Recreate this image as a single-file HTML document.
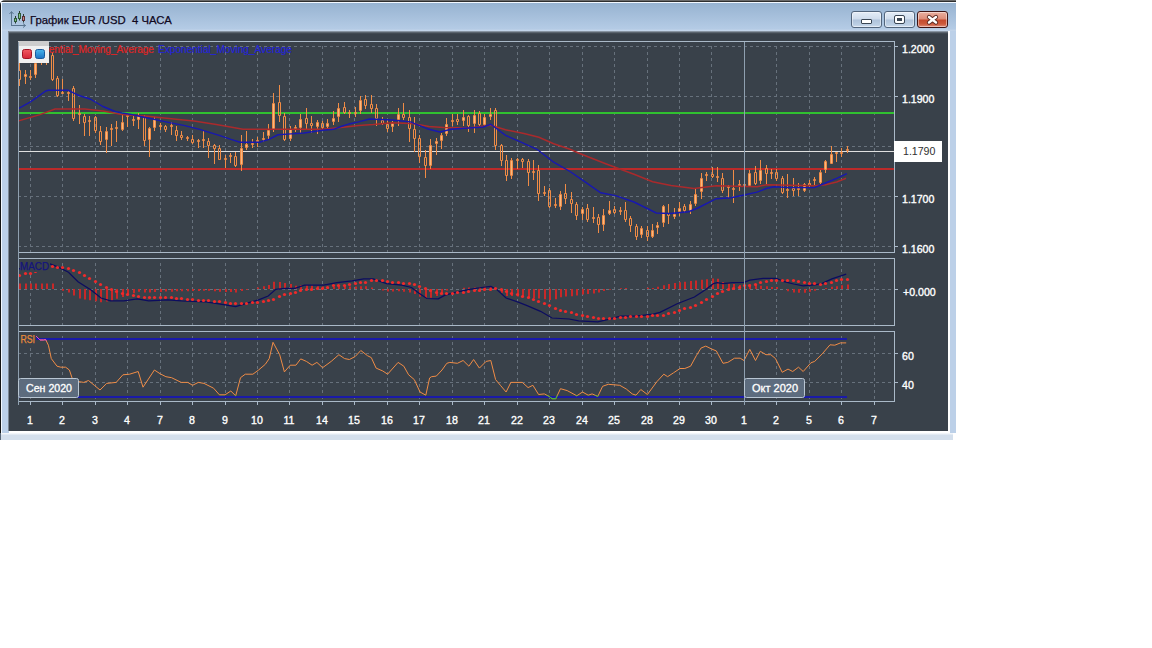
<!DOCTYPE html>
<html><head><meta charset="utf-8"><style>
html,body{margin:0;padding:0;background:#fff;width:1152px;height:648px;overflow:hidden;font-family:"Liberation Sans", sans-serif}
.a{position:absolute}
#title{position:absolute;left:30px;top:13.5px;font-size:11.3px;color:#10081e;white-space:pre;-webkit-text-stroke:0.25px #10081e}
.btn{position:absolute;top:11px;height:15px;border:1px solid #52657c;border-radius:3px;background:linear-gradient(#e4edf7 0%,#cfdcec 48%,#aec2da 52%,#bccfe4 85%,#d0def0 100%);box-shadow:inset 0 0 0 1px rgba(255,255,255,.45)}
svg{position:absolute;left:0;top:0}
</style></head><body>
<div class="a" style="left:0;top:0;width:956px;height:433px;background:#bcd0e8;border-top-left-radius:5px;overflow:hidden">
<div class="a" style="left:0;top:0;width:956px;height:1px;background:#6a6a6a"></div>
<div class="a" style="left:0;top:1px;width:956px;height:1px;background:#2e2e2e"></div>
<div class="a" style="left:0;top:0;width:1px;height:433px;background:#141414"></div>
<div class="a" style="left:1px;top:2px;width:955px;height:1px;background:#f2f8ff"></div>
<div class="a" style="left:1px;top:2px;width:1px;height:431px;background:#f2f8ff"></div>
<div class="a" style="left:2px;top:3px;width:954px;height:28px;background:linear-gradient(#97b3d1,#b4cbe5 92%,#c6d6ea)"></div>

<div class="a" style="left:9px;top:31px;width:941px;height:402px;background:#fff"></div>
<div class="a" style="left:8px;top:31px;width:940px;height:400px;background:linear-gradient(#a4b2c0 0px,#6a7480 1px,#4a525a 2px,#39414a 3px)"></div>
<div class="a" style="left:8px;top:31px;width:1px;height:400px;background:#7d8894"></div>
</div>
<div class="a" style="left:1px;top:433px;width:952px;height:7px;background:linear-gradient(#f4f7fb 0,#f0f4f9 1px,#d4dfec 2px)"></div>
<div class="a" style="left:0;top:433px;width:1px;height:7px;background:#5a6878"></div>
<div id="title">График EUR /USD  4 ЧАСА</div>
<div class="btn" style="left:851px;width:29px"><div class="a" style="left:9px;top:7px;width:9px;height:3px;background:#fff;border:1px solid #3a4654;border-radius:1px"></div></div>
<div class="btn" style="left:884px;width:29px"><div class="a" style="left:10px;top:4px;width:5px;height:3px;border:2px solid #fff;outline:1px solid #3a4654;background:#3a4654;border-radius:1px"></div></div>
<div class="btn" style="left:917px;width:29px;border-color:#3e1414;background:linear-gradient(#eab0a0 0%,#dc8c78 48%,#c44a2e 52%,#cc5a3c 80%,#e09080 100%)">
<svg width="29" height="15" style="position:absolute;left:0;top:0"><path d="M11 5L18 10.5M18 5L11 10.5" stroke="#5a2a22" stroke-width="4.2" stroke-linecap="round"/><path d="M11 5L18 10.5M18 5L11 10.5" stroke="#fff" stroke-width="2.4" stroke-linecap="round"/></svg></div>
<svg width="40" height="32" style="position:absolute;left:0;top:0">
<path d="M11.5 26V12M9.5 14L11.5 11.5L13.5 14M11 25.5H25.5M23 23.5L25.5 25.5L23 27.5" stroke="#5a7590" stroke-width="1" fill="none"/>
<path d="M15.5 16V23.5M19.5 11V20.5M23.5 14V22.5" stroke="#2a3a30" stroke-width="1"/>
<rect x="14.5" y="18.5" width="2" height="3" fill="#88c488" stroke="#2e5a38"/>
<rect x="18.5" y="13.5" width="2" height="5" fill="#88c488" stroke="#2e5a38"/>
<rect x="22.5" y="16.5" width="2" height="4" fill="#c88888" stroke="#5a2e34"/>
</svg>
<svg width="956" height="440" viewBox="0 0 956 440" font-family='"Liberation Sans", sans-serif'>
<line x1="30.5" y1="46" x2="30.5" y2="252" stroke="#67717c" stroke-dasharray="3 3"/>
<line x1="62.5" y1="46" x2="62.5" y2="252" stroke="#67717c" stroke-dasharray="3 3"/>
<line x1="95.5" y1="46" x2="95.5" y2="252" stroke="#67717c" stroke-dasharray="3 3"/>
<line x1="127.5" y1="46" x2="127.5" y2="252" stroke="#67717c" stroke-dasharray="3 3"/>
<line x1="160.5" y1="46" x2="160.5" y2="252" stroke="#67717c" stroke-dasharray="3 3"/>
<line x1="192.5" y1="46" x2="192.5" y2="252" stroke="#67717c" stroke-dasharray="3 3"/>
<line x1="225.5" y1="46" x2="225.5" y2="252" stroke="#67717c" stroke-dasharray="3 3"/>
<line x1="257.5" y1="46" x2="257.5" y2="252" stroke="#67717c" stroke-dasharray="3 3"/>
<line x1="289.5" y1="46" x2="289.5" y2="252" stroke="#67717c" stroke-dasharray="3 3"/>
<line x1="322.5" y1="46" x2="322.5" y2="252" stroke="#67717c" stroke-dasharray="3 3"/>
<line x1="354.5" y1="46" x2="354.5" y2="252" stroke="#67717c" stroke-dasharray="3 3"/>
<line x1="387.5" y1="46" x2="387.5" y2="252" stroke="#67717c" stroke-dasharray="3 3"/>
<line x1="419.5" y1="46" x2="419.5" y2="252" stroke="#67717c" stroke-dasharray="3 3"/>
<line x1="452.5" y1="46" x2="452.5" y2="252" stroke="#67717c" stroke-dasharray="3 3"/>
<line x1="484.5" y1="46" x2="484.5" y2="252" stroke="#67717c" stroke-dasharray="3 3"/>
<line x1="517.5" y1="46" x2="517.5" y2="252" stroke="#67717c" stroke-dasharray="3 3"/>
<line x1="549.5" y1="46" x2="549.5" y2="252" stroke="#67717c" stroke-dasharray="3 3"/>
<line x1="582.5" y1="46" x2="582.5" y2="252" stroke="#67717c" stroke-dasharray="3 3"/>
<line x1="614.5" y1="46" x2="614.5" y2="252" stroke="#67717c" stroke-dasharray="3 3"/>
<line x1="647.5" y1="46" x2="647.5" y2="252" stroke="#67717c" stroke-dasharray="3 3"/>
<line x1="679.5" y1="46" x2="679.5" y2="252" stroke="#67717c" stroke-dasharray="3 3"/>
<line x1="711.5" y1="46" x2="711.5" y2="252" stroke="#67717c" stroke-dasharray="3 3"/>
<line x1="744.5" y1="46" x2="744.5" y2="252" stroke="#67717c" stroke-dasharray="3 3"/>
<line x1="776.5" y1="46" x2="776.5" y2="252" stroke="#67717c" stroke-dasharray="3 3"/>
<line x1="809.5" y1="46" x2="809.5" y2="252" stroke="#67717c" stroke-dasharray="3 3"/>
<line x1="841.5" y1="46" x2="841.5" y2="252" stroke="#67717c" stroke-dasharray="3 3"/>
<line x1="874.5" y1="46" x2="874.5" y2="252" stroke="#67717c" stroke-dasharray="3 3"/>
<line x1="30.5" y1="263" x2="30.5" y2="325" stroke="#67717c" stroke-dasharray="3 3"/>
<line x1="62.5" y1="263" x2="62.5" y2="325" stroke="#67717c" stroke-dasharray="3 3"/>
<line x1="95.5" y1="263" x2="95.5" y2="325" stroke="#67717c" stroke-dasharray="3 3"/>
<line x1="127.5" y1="263" x2="127.5" y2="325" stroke="#67717c" stroke-dasharray="3 3"/>
<line x1="160.5" y1="263" x2="160.5" y2="325" stroke="#67717c" stroke-dasharray="3 3"/>
<line x1="192.5" y1="263" x2="192.5" y2="325" stroke="#67717c" stroke-dasharray="3 3"/>
<line x1="225.5" y1="263" x2="225.5" y2="325" stroke="#67717c" stroke-dasharray="3 3"/>
<line x1="257.5" y1="263" x2="257.5" y2="325" stroke="#67717c" stroke-dasharray="3 3"/>
<line x1="289.5" y1="263" x2="289.5" y2="325" stroke="#67717c" stroke-dasharray="3 3"/>
<line x1="322.5" y1="263" x2="322.5" y2="325" stroke="#67717c" stroke-dasharray="3 3"/>
<line x1="354.5" y1="263" x2="354.5" y2="325" stroke="#67717c" stroke-dasharray="3 3"/>
<line x1="387.5" y1="263" x2="387.5" y2="325" stroke="#67717c" stroke-dasharray="3 3"/>
<line x1="419.5" y1="263" x2="419.5" y2="325" stroke="#67717c" stroke-dasharray="3 3"/>
<line x1="452.5" y1="263" x2="452.5" y2="325" stroke="#67717c" stroke-dasharray="3 3"/>
<line x1="484.5" y1="263" x2="484.5" y2="325" stroke="#67717c" stroke-dasharray="3 3"/>
<line x1="517.5" y1="263" x2="517.5" y2="325" stroke="#67717c" stroke-dasharray="3 3"/>
<line x1="549.5" y1="263" x2="549.5" y2="325" stroke="#67717c" stroke-dasharray="3 3"/>
<line x1="582.5" y1="263" x2="582.5" y2="325" stroke="#67717c" stroke-dasharray="3 3"/>
<line x1="614.5" y1="263" x2="614.5" y2="325" stroke="#67717c" stroke-dasharray="3 3"/>
<line x1="647.5" y1="263" x2="647.5" y2="325" stroke="#67717c" stroke-dasharray="3 3"/>
<line x1="679.5" y1="263" x2="679.5" y2="325" stroke="#67717c" stroke-dasharray="3 3"/>
<line x1="711.5" y1="263" x2="711.5" y2="325" stroke="#67717c" stroke-dasharray="3 3"/>
<line x1="744.5" y1="263" x2="744.5" y2="325" stroke="#67717c" stroke-dasharray="3 3"/>
<line x1="776.5" y1="263" x2="776.5" y2="325" stroke="#67717c" stroke-dasharray="3 3"/>
<line x1="809.5" y1="263" x2="809.5" y2="325" stroke="#67717c" stroke-dasharray="3 3"/>
<line x1="841.5" y1="263" x2="841.5" y2="325" stroke="#67717c" stroke-dasharray="3 3"/>
<line x1="874.5" y1="263" x2="874.5" y2="325" stroke="#67717c" stroke-dasharray="3 3"/>
<line x1="30.5" y1="336" x2="30.5" y2="401" stroke="#67717c" stroke-dasharray="3 3"/>
<line x1="62.5" y1="336" x2="62.5" y2="401" stroke="#67717c" stroke-dasharray="3 3"/>
<line x1="95.5" y1="336" x2="95.5" y2="401" stroke="#67717c" stroke-dasharray="3 3"/>
<line x1="127.5" y1="336" x2="127.5" y2="401" stroke="#67717c" stroke-dasharray="3 3"/>
<line x1="160.5" y1="336" x2="160.5" y2="401" stroke="#67717c" stroke-dasharray="3 3"/>
<line x1="192.5" y1="336" x2="192.5" y2="401" stroke="#67717c" stroke-dasharray="3 3"/>
<line x1="225.5" y1="336" x2="225.5" y2="401" stroke="#67717c" stroke-dasharray="3 3"/>
<line x1="257.5" y1="336" x2="257.5" y2="401" stroke="#67717c" stroke-dasharray="3 3"/>
<line x1="289.5" y1="336" x2="289.5" y2="401" stroke="#67717c" stroke-dasharray="3 3"/>
<line x1="322.5" y1="336" x2="322.5" y2="401" stroke="#67717c" stroke-dasharray="3 3"/>
<line x1="354.5" y1="336" x2="354.5" y2="401" stroke="#67717c" stroke-dasharray="3 3"/>
<line x1="387.5" y1="336" x2="387.5" y2="401" stroke="#67717c" stroke-dasharray="3 3"/>
<line x1="419.5" y1="336" x2="419.5" y2="401" stroke="#67717c" stroke-dasharray="3 3"/>
<line x1="452.5" y1="336" x2="452.5" y2="401" stroke="#67717c" stroke-dasharray="3 3"/>
<line x1="484.5" y1="336" x2="484.5" y2="401" stroke="#67717c" stroke-dasharray="3 3"/>
<line x1="517.5" y1="336" x2="517.5" y2="401" stroke="#67717c" stroke-dasharray="3 3"/>
<line x1="549.5" y1="336" x2="549.5" y2="401" stroke="#67717c" stroke-dasharray="3 3"/>
<line x1="582.5" y1="336" x2="582.5" y2="401" stroke="#67717c" stroke-dasharray="3 3"/>
<line x1="614.5" y1="336" x2="614.5" y2="401" stroke="#67717c" stroke-dasharray="3 3"/>
<line x1="647.5" y1="336" x2="647.5" y2="401" stroke="#67717c" stroke-dasharray="3 3"/>
<line x1="679.5" y1="336" x2="679.5" y2="401" stroke="#67717c" stroke-dasharray="3 3"/>
<line x1="711.5" y1="336" x2="711.5" y2="401" stroke="#67717c" stroke-dasharray="3 3"/>
<line x1="744.5" y1="336" x2="744.5" y2="401" stroke="#67717c" stroke-dasharray="3 3"/>
<line x1="776.5" y1="336" x2="776.5" y2="401" stroke="#67717c" stroke-dasharray="3 3"/>
<line x1="809.5" y1="336" x2="809.5" y2="401" stroke="#67717c" stroke-dasharray="3 3"/>
<line x1="841.5" y1="336" x2="841.5" y2="401" stroke="#67717c" stroke-dasharray="3 3"/>
<line x1="874.5" y1="336" x2="874.5" y2="401" stroke="#67717c" stroke-dasharray="3 3"/>
<line x1="19" y1="46.5" x2="894" y2="46.5" stroke="#67717c" stroke-dasharray="3 3" stroke-dashoffset="1"/>
<line x1="19" y1="96.5" x2="894" y2="96.5" stroke="#67717c" stroke-dasharray="3 3" stroke-dashoffset="1"/>
<line x1="19" y1="146.5" x2="894" y2="146.5" stroke="#67717c" stroke-dasharray="3 3" stroke-dashoffset="1"/>
<line x1="19" y1="196.5" x2="894" y2="196.5" stroke="#67717c" stroke-dasharray="3 3" stroke-dashoffset="1"/>
<line x1="19" y1="246.5" x2="894" y2="246.5" stroke="#67717c" stroke-dasharray="3 3" stroke-dashoffset="1"/>
<line x1="19" y1="289.5" x2="894" y2="289.5" stroke="#67717c" stroke-dasharray="3 3" stroke-dashoffset="1"/>
<line x1="19" y1="353.5" x2="894" y2="353.5" stroke="#67717c" stroke-dasharray="3 3" stroke-dashoffset="1"/>
<line x1="19" y1="382.5" x2="894" y2="382.5" stroke="#67717c" stroke-dasharray="3 3" stroke-dashoffset="1"/>
<rect x="18.5" y="41.5" width="876" height="211" fill="none" stroke="#aab9c8" stroke-width="1"/>
<rect x="18.5" y="258.5" width="876" height="67" fill="none" stroke="#aab9c8" stroke-width="1"/>
<rect x="18.5" y="331.5" width="876" height="70" fill="none" stroke="#aab9c8" stroke-width="1"/>
<line x1="894" y1="46.5" x2="898" y2="46.5" stroke="#aab9c8"/>
<text x="902" y="53" font-size="10.6" fill="#fff" stroke="#fff" stroke-width="0.35">1.2000</text>
<line x1="894" y1="96.5" x2="898" y2="96.5" stroke="#aab9c8"/>
<text x="902" y="103" font-size="10.6" fill="#fff" stroke="#fff" stroke-width="0.35">1.1900</text>
<line x1="894" y1="196.5" x2="898" y2="196.5" stroke="#aab9c8"/>
<text x="902" y="203" font-size="10.6" fill="#fff" stroke="#fff" stroke-width="0.35">1.1700</text>
<line x1="894" y1="246.5" x2="898" y2="246.5" stroke="#aab9c8"/>
<text x="902" y="253" font-size="10.6" fill="#fff" stroke="#fff" stroke-width="0.35">1.1600</text>
<line x1="894" y1="289.5" x2="898" y2="289.5" stroke="#aab9c8"/>
<text x="903" y="296" font-size="10.6" fill="#fff" stroke="#fff" stroke-width="0.35">+0.000</text>
<line x1="894" y1="353.5" x2="898" y2="353.5" stroke="#aab9c8"/>
<text x="902" y="360" font-size="10.6" fill="#fff" stroke="#fff" stroke-width="0.35">60</text>
<line x1="894" y1="382.5" x2="898" y2="382.5" stroke="#aab9c8"/>
<text x="902" y="389" font-size="10.6" fill="#fff" stroke="#fff" stroke-width="0.35">40</text>
<line x1="30.5" y1="401" x2="30.5" y2="405" stroke="#aab9c8"/>
<text x="30" y="424" font-size="10.6" fill="#fff" stroke="#fff" stroke-width="0.35" text-anchor="middle">1</text>
<line x1="62.5" y1="401" x2="62.5" y2="405" stroke="#aab9c8"/>
<text x="62" y="424" font-size="10.6" fill="#fff" stroke="#fff" stroke-width="0.35" text-anchor="middle">2</text>
<line x1="95.5" y1="401" x2="95.5" y2="405" stroke="#aab9c8"/>
<text x="95" y="424" font-size="10.6" fill="#fff" stroke="#fff" stroke-width="0.35" text-anchor="middle">3</text>
<line x1="127.5" y1="401" x2="127.5" y2="405" stroke="#aab9c8"/>
<text x="127" y="424" font-size="10.6" fill="#fff" stroke="#fff" stroke-width="0.35" text-anchor="middle">4</text>
<line x1="160.5" y1="401" x2="160.5" y2="405" stroke="#aab9c8"/>
<text x="160" y="424" font-size="10.6" fill="#fff" stroke="#fff" stroke-width="0.35" text-anchor="middle">7</text>
<line x1="192.5" y1="401" x2="192.5" y2="405" stroke="#aab9c8"/>
<text x="192" y="424" font-size="10.6" fill="#fff" stroke="#fff" stroke-width="0.35" text-anchor="middle">8</text>
<line x1="225.5" y1="401" x2="225.5" y2="405" stroke="#aab9c8"/>
<text x="225" y="424" font-size="10.6" fill="#fff" stroke="#fff" stroke-width="0.35" text-anchor="middle">9</text>
<line x1="257.5" y1="401" x2="257.5" y2="405" stroke="#aab9c8"/>
<text x="257" y="424" font-size="10.6" fill="#fff" stroke="#fff" stroke-width="0.35" text-anchor="middle">10</text>
<line x1="289.5" y1="401" x2="289.5" y2="405" stroke="#aab9c8"/>
<text x="289" y="424" font-size="10.6" fill="#fff" stroke="#fff" stroke-width="0.35" text-anchor="middle">11</text>
<line x1="322.5" y1="401" x2="322.5" y2="405" stroke="#aab9c8"/>
<text x="322" y="424" font-size="10.6" fill="#fff" stroke="#fff" stroke-width="0.35" text-anchor="middle">14</text>
<line x1="354.5" y1="401" x2="354.5" y2="405" stroke="#aab9c8"/>
<text x="354" y="424" font-size="10.6" fill="#fff" stroke="#fff" stroke-width="0.35" text-anchor="middle">15</text>
<line x1="387.5" y1="401" x2="387.5" y2="405" stroke="#aab9c8"/>
<text x="387" y="424" font-size="10.6" fill="#fff" stroke="#fff" stroke-width="0.35" text-anchor="middle">16</text>
<line x1="419.5" y1="401" x2="419.5" y2="405" stroke="#aab9c8"/>
<text x="419" y="424" font-size="10.6" fill="#fff" stroke="#fff" stroke-width="0.35" text-anchor="middle">17</text>
<line x1="452.5" y1="401" x2="452.5" y2="405" stroke="#aab9c8"/>
<text x="452" y="424" font-size="10.6" fill="#fff" stroke="#fff" stroke-width="0.35" text-anchor="middle">18</text>
<line x1="484.5" y1="401" x2="484.5" y2="405" stroke="#aab9c8"/>
<text x="484" y="424" font-size="10.6" fill="#fff" stroke="#fff" stroke-width="0.35" text-anchor="middle">21</text>
<line x1="517.5" y1="401" x2="517.5" y2="405" stroke="#aab9c8"/>
<text x="517" y="424" font-size="10.6" fill="#fff" stroke="#fff" stroke-width="0.35" text-anchor="middle">22</text>
<line x1="549.5" y1="401" x2="549.5" y2="405" stroke="#aab9c8"/>
<text x="549" y="424" font-size="10.6" fill="#fff" stroke="#fff" stroke-width="0.35" text-anchor="middle">23</text>
<line x1="582.5" y1="401" x2="582.5" y2="405" stroke="#aab9c8"/>
<text x="582" y="424" font-size="10.6" fill="#fff" stroke="#fff" stroke-width="0.35" text-anchor="middle">24</text>
<line x1="614.5" y1="401" x2="614.5" y2="405" stroke="#aab9c8"/>
<text x="614" y="424" font-size="10.6" fill="#fff" stroke="#fff" stroke-width="0.35" text-anchor="middle">25</text>
<line x1="647.5" y1="401" x2="647.5" y2="405" stroke="#aab9c8"/>
<text x="647" y="424" font-size="10.6" fill="#fff" stroke="#fff" stroke-width="0.35" text-anchor="middle">28</text>
<line x1="679.5" y1="401" x2="679.5" y2="405" stroke="#aab9c8"/>
<text x="679" y="424" font-size="10.6" fill="#fff" stroke="#fff" stroke-width="0.35" text-anchor="middle">29</text>
<line x1="711.5" y1="401" x2="711.5" y2="405" stroke="#aab9c8"/>
<text x="711" y="424" font-size="10.6" fill="#fff" stroke="#fff" stroke-width="0.35" text-anchor="middle">30</text>
<line x1="744.5" y1="401" x2="744.5" y2="405" stroke="#aab9c8"/>
<text x="744" y="424" font-size="10.6" fill="#fff" stroke="#fff" stroke-width="0.35" text-anchor="middle">1</text>
<line x1="776.5" y1="401" x2="776.5" y2="405" stroke="#aab9c8"/>
<text x="776" y="424" font-size="10.6" fill="#fff" stroke="#fff" stroke-width="0.35" text-anchor="middle">2</text>
<line x1="809.5" y1="401" x2="809.5" y2="405" stroke="#aab9c8"/>
<text x="809" y="424" font-size="10.6" fill="#fff" stroke="#fff" stroke-width="0.35" text-anchor="middle">5</text>
<line x1="841.5" y1="401" x2="841.5" y2="405" stroke="#aab9c8"/>
<text x="841" y="424" font-size="10.6" fill="#fff" stroke="#fff" stroke-width="0.35" text-anchor="middle">6</text>
<line x1="874.5" y1="401" x2="874.5" y2="405" stroke="#aab9c8"/>
<text x="874" y="424" font-size="10.6" fill="#fff" stroke="#fff" stroke-width="0.35" text-anchor="middle">7</text>
<defs><clipPath id="cm"><rect x="19" y="42" width="875" height="210"/></clipPath><clipPath id="cd"><rect x="19" y="259" width="875" height="66"/></clipPath><clipPath id="cr"><rect x="19" y="332" width="875" height="69"/></clipPath></defs>
<line x1="19" y1="113" x2="894" y2="113" stroke="#30c030" stroke-width="2"/>
<line x1="19" y1="151.5" x2="894" y2="151.5" stroke="#e0e0e0" stroke-width="1"/>
<line x1="19" y1="169" x2="894" y2="169" stroke="#bc2a2a" stroke-width="2"/>
<g clip-path="url(#cm)"><path d="M25 75h1v1h-1zM35 64h1v10h-1zM41 59h1v2h-1zM106 132h1v7h-1zM122 123h1v6h-1zM138 117h1v2h-1zM149 129h1v10h-1zM154 120h1v7h-1zM241 149h1v15h-1zM246 145h1v2h-1zM268 131h1v4h-1zM273 104h1v25h-1zM290 130h1v8h-1zM300 120h1v7h-1zM317 123h1v3h-1zM327 124h1v2h-1zM333 119h1v2h-1zM338 109h1v7h-1zM360 101h1v9h-1zM392 124h1v2h-1zM398 115h1v4h-1zM430 146h1v19h-1zM436 142h1v1h-1zM441 136h1v4h-1zM446 125h1v8h-1zM463 118h1v2h-1zM474 116h1v7h-1zM484 118h1v6h-1zM490 115h1v1h-1zM511 161h1v14h-1zM560 195h1v11h-1zM582 210h1v3h-1zM603 216h1v8h-1zM609 211h1v2h-1zM641 229h1v5h-1zM652 231h1v5h-1zM657 226h1v1h-1zM663 207h1v15h-1zM674 215h1v1h-1zM679 209h1v2h-1zM690 205h1v5h-1zM695 195h1v8h-1zM701 179h1v12h-1zM749 174h1v11h-1zM760 171h1v9h-1zM804 185h1v5h-1zM820 173h1v9h-1zM825 162h1v7h-1zM831 155h1v8h-1z" fill="#f8b880"/><path d="M19.5 63V70M19.5 80V86M18.5 70.5h2v9h-2zM25.5 70V74M25.5 77V84M24.5 74.5h2v2h-2zM30.5 70V76M30.5 78V80M29.5 76.5h2v1h-2zM35.5 58V63M35.5 75V78M34.5 63.5h2v11h-2zM41.5 55V58M41.5 62V65M40.5 58.5h2v3h-2zM46.5 52V56M46.5 60V65M45.5 56.5h2v3h-2zM52.5 52V55M52.5 80V81M51.5 55.5h2v24h-2zM57.5 76V78M57.5 96V97M56.5 78.5h2v17h-2zM62.5 79V92M62.5 94V94M61.5 92.5h2v1h-2zM68.5 90V92M68.5 94V101M67.5 92.5h2v1h-2zM73.5 86V88M73.5 119V121M72.5 88.5h2v30h-2zM79.5 105V113M79.5 115V124M78.5 113.5h2v1h-2zM84.5 114V116M84.5 123V136M83.5 116.5h2v6h-2zM89.5 116V120M89.5 122V136M88.5 120.5h2v1h-2zM95.5 116V117M95.5 131V133M94.5 117.5h2v13h-2zM100.5 126V131M100.5 142V145M99.5 131.5h2v10h-2zM106.5 127V131M106.5 140V153M105.5 131.5h2v8h-2zM111.5 124V128M111.5 130V146M110.5 128.5h2v1h-2zM116.5 121V127M116.5 129V142M115.5 127.5h2v1h-2zM122.5 114V122M122.5 130V131M121.5 122.5h2v7h-2zM127.5 114V115M127.5 117V127M126.5 115.5h2v1h-2zM133.5 115V119M133.5 121V126M132.5 119.5h2v1h-2zM138.5 113V116M138.5 120V129M137.5 116.5h2v3h-2zM144.5 115V117M144.5 141V146M143.5 117.5h2v23h-2zM149.5 127V128M149.5 140V157M148.5 128.5h2v11h-2zM154.5 117V119M154.5 128V131M153.5 119.5h2v8h-2zM160.5 123V125M160.5 127V130M159.5 125.5h2v1h-2zM165.5 125V126M165.5 130V132M164.5 126.5h2v3h-2zM171.5 122V125M171.5 127V135M170.5 125.5h2v1h-2zM176.5 126V130M176.5 136V141M175.5 130.5h2v5h-2zM181.5 131V135M181.5 138V140M180.5 135.5h2v2h-2zM187.5 136V137M187.5 139V141M186.5 137.5h2v1h-2zM192.5 135V139M192.5 143V144M191.5 139.5h2v3h-2zM198.5 139V140M198.5 142V148M197.5 140.5h2v1h-2zM203.5 131V139M203.5 141V148M202.5 139.5h2v1h-2zM208.5 138V141M208.5 146V158M207.5 141.5h2v4h-2zM214.5 144V145M214.5 149V164M213.5 145.5h2v3h-2zM219.5 145V148M219.5 160V160M218.5 148.5h2v11h-2zM225.5 155V158M225.5 160V168M224.5 158.5h2v1h-2zM230.5 153V155M230.5 157V163M229.5 155.5h2v1h-2zM235.5 152V156M235.5 166V167M234.5 156.5h2v9h-2zM241.5 135V148M241.5 165V171M240.5 148.5h2v16h-2zM246.5 131V144M246.5 148V150M245.5 144.5h2v3h-2zM252.5 139V143M252.5 145V148M251.5 143.5h2v1h-2zM257.5 137V140M257.5 142V147M256.5 140.5h2v1h-2zM263.5 132V138M263.5 140V142M262.5 138.5h2v1h-2zM268.5 124V130M268.5 136V139M267.5 130.5h2v5h-2zM273.5 93V103M273.5 130V132M272.5 103.5h2v26h-2zM279.5 85V102M279.5 116V122M278.5 102.5h2v13h-2zM284.5 113V116M284.5 140V141M283.5 116.5h2v23h-2zM290.5 126V129M290.5 139V141M289.5 129.5h2v9h-2zM295.5 125V127M295.5 129V132M294.5 127.5h2v1h-2zM300.5 114V119M300.5 128V133M299.5 119.5h2v8h-2zM306.5 108V118M306.5 124V129M305.5 118.5h2v5h-2zM311.5 116V123M311.5 126V133M310.5 123.5h2v2h-2zM317.5 120V122M317.5 127V134M316.5 122.5h2v4h-2zM322.5 121V123M322.5 128V130M321.5 123.5h2v4h-2zM327.5 119V123M327.5 127V129M326.5 123.5h2v3h-2zM333.5 111V118M333.5 122V125M332.5 118.5h2v3h-2zM338.5 103V108M338.5 117V122M337.5 108.5h2v8h-2zM344.5 102V107M344.5 113V114M343.5 107.5h2v5h-2zM349.5 110V112M349.5 114V118M348.5 112.5h2v1h-2zM355.5 107V112M355.5 114V117M354.5 112.5h2v1h-2zM360.5 96V100M360.5 111V114M359.5 100.5h2v10h-2zM365.5 95V99M365.5 106V109M364.5 99.5h2v6h-2zM371.5 95V104M371.5 109V113M370.5 104.5h2v4h-2zM376.5 104V108M376.5 119V126M375.5 108.5h2v10h-2zM382.5 117V120M382.5 124V125M381.5 120.5h2v3h-2zM387.5 120V124M387.5 129V132M386.5 124.5h2v4h-2zM392.5 121V123M392.5 127V132M391.5 123.5h2v3h-2zM398.5 108V114M398.5 120V126M397.5 114.5h2v5h-2zM403.5 103V114M403.5 118V120M402.5 114.5h2v3h-2zM409.5 110V117M409.5 129V142M408.5 117.5h2v11h-2zM414.5 117V129M414.5 139V152M413.5 129.5h2v9h-2zM419.5 135V138M419.5 157V163M418.5 138.5h2v18h-2zM425.5 150V157M425.5 166V178M424.5 157.5h2v8h-2zM430.5 139V145M430.5 166V169M429.5 145.5h2v20h-2zM436.5 138V141M436.5 144V155M435.5 141.5h2v2h-2zM441.5 133V135M441.5 141V149M440.5 135.5h2v5h-2zM446.5 118V124M446.5 134V136M445.5 124.5h2v9h-2zM452.5 114V120M452.5 122V126M451.5 120.5h2v1h-2zM457.5 114V119M457.5 122V125M456.5 119.5h2v2h-2zM463.5 110V117M463.5 121V126M462.5 117.5h2v3h-2zM468.5 115V116M468.5 126V132M467.5 116.5h2v9h-2zM474.5 110V115M474.5 124V133M473.5 115.5h2v8h-2zM479.5 111V113M479.5 125V126M478.5 113.5h2v11h-2zM484.5 114V117M484.5 125V126M483.5 117.5h2v7h-2zM490.5 108V114M490.5 117V120M489.5 114.5h2v2h-2zM495.5 108V110M495.5 146V150M494.5 110.5h2v35h-2zM501.5 144V145M501.5 161V166M500.5 145.5h2v15h-2zM506.5 155V160M506.5 176V181M505.5 160.5h2v15h-2zM511.5 158V160M511.5 176V179M510.5 160.5h2v15h-2zM517.5 158V159M517.5 161V169M516.5 159.5h2v1h-2zM522.5 158V159M522.5 162V168M521.5 159.5h2v2h-2zM528.5 159V161M528.5 173V186M527.5 161.5h2v11h-2zM533.5 160V171M533.5 173V180M532.5 171.5h2v1h-2zM538.5 165V170M538.5 194V201M537.5 170.5h2v23h-2zM544.5 186V192M544.5 194V196M543.5 192.5h2v1h-2zM549.5 188V190M549.5 207V208M548.5 190.5h2v16h-2zM555.5 198V204M555.5 206V208M554.5 204.5h2v1h-2zM560.5 191V194M560.5 207V210M559.5 194.5h2v12h-2zM565.5 184V193M565.5 199V204M564.5 193.5h2v5h-2zM571.5 192V199M571.5 204V213M570.5 199.5h2v4h-2zM576.5 202V204M576.5 216V220M575.5 204.5h2v11h-2zM582.5 207V209M582.5 214V220M581.5 209.5h2v4h-2zM587.5 204V208M587.5 220V222M586.5 208.5h2v11h-2zM593.5 207V217M593.5 219V223M592.5 217.5h2v1h-2zM598.5 214V217M598.5 225V233M597.5 217.5h2v7h-2zM603.5 209V215M603.5 225V231M602.5 215.5h2v9h-2zM609.5 201V210M609.5 214V215M608.5 210.5h2v3h-2zM614.5 206V209M614.5 213V214M613.5 209.5h2v3h-2zM620.5 207V210M620.5 212V215M619.5 210.5h2v1h-2zM625.5 202V210M625.5 220V222M624.5 210.5h2v9h-2zM630.5 216V218M630.5 226V232M629.5 218.5h2v7h-2zM636.5 224V226M636.5 237V240M635.5 226.5h2v10h-2zM641.5 226V228M641.5 235V238M640.5 228.5h2v6h-2zM647.5 226V230M647.5 237V241M646.5 230.5h2v6h-2zM652.5 224V230M652.5 237V238M651.5 230.5h2v6h-2zM657.5 222V225M657.5 228V234M656.5 225.5h2v2h-2zM663.5 205V206M663.5 223V227M662.5 206.5h2v16h-2zM668.5 204V213M668.5 216V224M667.5 213.5h2v2h-2zM674.5 208V214M674.5 217V219M673.5 214.5h2v2h-2zM679.5 202V208M679.5 212V216M678.5 208.5h2v3h-2zM684.5 204V206M684.5 211V213M683.5 206.5h2v4h-2zM690.5 201V204M690.5 211V214M689.5 204.5h2v6h-2zM695.5 188V194M695.5 204V206M694.5 194.5h2v9h-2zM701.5 173V178M701.5 192V199M700.5 178.5h2v13h-2zM706.5 172V174M706.5 176V181M705.5 174.5h2v1h-2zM712.5 167V174M712.5 177V178M711.5 174.5h2v2h-2zM717.5 167V176M717.5 178V182M716.5 176.5h2v1h-2zM722.5 173V178M722.5 191V193M721.5 178.5h2v12h-2zM728.5 185V186M728.5 188V198M727.5 186.5h2v1h-2zM733.5 170V188M733.5 190V203M732.5 188.5h2v1h-2zM739.5 180V184M739.5 186V191M738.5 184.5h2v1h-2zM744.5 179V184M744.5 186V188M743.5 184.5h2v1h-2zM749.5 170V173M749.5 186V187M748.5 173.5h2v12h-2zM755.5 166V172M755.5 184V185M754.5 172.5h2v11h-2zM760.5 160V170M760.5 181V184M759.5 170.5h2v10h-2zM766.5 165V168M766.5 174V185M765.5 168.5h2v5h-2zM771.5 169V172M771.5 174V179M770.5 172.5h2v1h-2zM776.5 169V172M776.5 179V181M775.5 172.5h2v6h-2zM782.5 176V178M782.5 193V194M781.5 178.5h2v14h-2zM787.5 174V189M787.5 191V198M786.5 189.5h2v1h-2zM793.5 178V188M793.5 191V196M792.5 188.5h2v2h-2zM798.5 183V188M798.5 190V196M797.5 188.5h2v1h-2zM804.5 183V184M804.5 191V192M803.5 184.5h2v6h-2zM809.5 180V183M809.5 186V187M808.5 183.5h2v2h-2zM814.5 177V179M814.5 181V186M813.5 179.5h2v1h-2zM820.5 170V172M820.5 183V184M819.5 172.5h2v10h-2zM825.5 160V161M825.5 170V173M824.5 161.5h2v8h-2zM831.5 146V154M831.5 164V164M830.5 154.5h2v9h-2zM836.5 152V152M836.5 154V162M835.5 152.5h2v1h-2zM841.5 148V152M841.5 154V157M840.5 152.5h2v1h-2zM847.5 146V149M847.5 151V153M846.5 149.5h2v1h-2z" stroke="#f08c46" stroke-width="1" fill="none"/></g>
<g clip-path="url(#cm)"><polyline points="18.0,121.0 40.0,114.6 55.0,109.0 84.7,109.0 103.0,111.0 122.0,114.5 147.8,116.3 173.7,119.0 194.0,121.0 216.3,124.6 243.0,129.3 267.0,129.3 322.6,129.3 333.7,128.3 350.0,126.5 358.5,125.6 373.3,124.6 391.9,122.8 414.0,123.7 428.9,126.5 443.7,127.4 468.5,128.0 490.7,125.2 505.6,129.8 524.0,133.5 538.9,137.2 553.7,143.7 570.0,149.3 578.5,153.0 606.3,164.0 634.0,174.3 652.6,181.7 671.0,185.4 694.0,188.5 716.3,185.7 757.0,186.7 766.3,184.8 814.4,185.7 825.5,184.8 836.7,182.0 846.0,178.3" fill="none" stroke="#aa2a2c" stroke-width="1.5"/>
<polyline points="18.0,108.8 30.5,101.8 45.8,91.0 48.5,90.3 68.0,90.3 73.5,92.8 79.0,95.5 90.0,99.0 97.0,103.0 103.0,106.5 115.0,111.5 122.0,113.0 131.0,114.4 144.0,117.2 166.0,121.9 184.8,125.6 199.6,129.3 220.0,135.7 231.0,139.4 240.0,142.2 259.6,142.2 268.9,139.4 278.0,134.8 291.0,133.9 304.0,133.0 322.6,130.2 333.7,129.3 341.0,126.5 350.0,123.7 358.5,121.9 369.6,119.0 391.9,120.0 410.4,121.9 419.6,125.6 428.9,129.3 440.0,132.0 451.0,129.3 468.5,128.0 483.3,127.0 490.7,124.3 505.6,135.4 520.4,141.9 537.0,149.3 553.7,162.2 570.0,171.5 582.2,179.8 600.7,192.8 615.6,195.6 634.0,202.0 656.3,213.0 670.0,213.5 688.5,211.7 697.8,208.0 716.3,198.7 731.0,197.8 744.0,195.0 757.0,192.2 766.3,188.5 773.7,186.7 790.0,187.6 814.4,187.6 825.5,183.0 836.7,178.3 846.9,173.7" fill="none" stroke="#1818b0" stroke-width="1.4"/></g>
<rect x="894" y="141" width="48" height="21" fill="#fff"/>
<text x="903" y="155" font-size="10.6" fill="#303030" textLength="32.4" lengthAdjust="spacingAndGlyphs">1.1790</text>
<text x="20" y="53" font-size="10.6" fill="#e02424" stroke="#e02424" stroke-width="0.2" textLength="134" lengthAdjust="spacingAndGlyphs">Exponential_Moving_Average</text>
<text x="158" y="53" font-size="10.6" fill="#2424d8" stroke="#2424d8" stroke-width="0.2" textLength="134" lengthAdjust="spacingAndGlyphs">Exponential_Moving_Average</text>
<rect x="18" y="41" width="31" height="22" fill="#f0f0f0"/><rect x="18" y="41" width="31" height="5" fill="#cdcdcd"/>
<defs><linearGradient id="gr" x1="0" y1="0" x2="0" y2="1"><stop offset="0" stop-color="#f25a62"/><stop offset="1" stop-color="#d42636"/></linearGradient><linearGradient id="gb" x1="0" y1="0" x2="0" y2="1"><stop offset="0" stop-color="#48b6ec"/><stop offset="1" stop-color="#1c72c4"/></linearGradient></defs>
<rect x="22.5" y="49.5" width="9" height="9" rx="2" fill="url(#gr)" stroke="#a01424"/><rect x="35.5" y="49.5" width="9" height="9" rx="2" fill="url(#gb)" stroke="#1a5a9c"/>
<g clip-path="url(#cd)"><path d="M20 289V283.5M26 289V283.5M31 289V283.5M36 289V283.5M42 289V283.5M47 289V283.5M53 289V283.5M63 289V290.8M69 289V292.4M74 289V295.6M80 289V298.6M85 289V299.5M90 289V300.2M96 289V301.2M101 289V302.3M107 289V301.4M112 289V300.8M117 289V298.8M123 289V296.9M128 289V294.9M134 289V293.3M139 289V291.8M145 289V292.4M150 289V292.6M155 289V292.1M161 289V291.9M166 289V291.6M172 289V291.7M177 289V291.2M182 289V291.3M188 289V291.2M193 289V291.0M199 289V290.9M204 289V290.8M209 289V290.8M215 289V291.3M220 289V291.7M226 289V292.1M231 289V292.1M236 289V292.5M242 289V291.1M247 289V289.7M258 289V287.5M264 289V286.3M269 289V285.0M274 289V281.8M280 289V282.1M285 289V283.0M291 289V284.1M296 289V285.8M301 289V285.2M307 289V285.1M312 289V285.2M318 289V286.3M323 289V286.4M328 289V286.8M334 289V287.0M339 289V286.3M345 289V286.2M350 289V286.5M356 289V286.6M361 289V286.3M366 289V286.2M372 289V287.6M383 289V290.6M388 289V291.4M393 289V291.6M399 289V291.3M404 289V291.8M410 289V292.4M415 289V294.1M420 289V296.7M426 289V298.2M431 289V297.7M437 289V295.9M442 289V293.3M447 289V290.5M464 289V287.7M469 289V287.6M475 289V287.5M480 289V287.1M485 289V286.7M491 289V287.0M502 289V292.7M507 289V296.0M512 289V296.1M518 289V296.5M523 289V297.0M529 289V297.6M534 289V298.1M539 289V298.6M545 289V299.2M550 289V300.1M556 289V299.2M561 289V297.2M566 289V296.6M572 289V296.2M577 289V295.4M583 289V294.5M588 289V293.9M594 289V293.6M599 289V292.6M604 289V291.1M610 289V289.8M621 289V288.3M626 289V288.1M648 289V287.8M653 289V287.9M658 289V286.8M664 289V285.3M669 289V283.9M675 289V283.0M680 289V282.3M685 289V281.7M691 289V281.0M696 289V280.4M702 289V279.8M707 289V279.3M713 289V278.4M718 289V278.8M723 289V281.9M729 289V283.4M734 289V284.1M740 289V284.9M745 289V286.4M750 289V284.2M756 289V285.0M761 289V285.7M767 289V286.3M772 289V287.0M777 289V287.1M788 289V291.3M794 289V292.6M799 289V292.8M805 289V292.7M810 289V291.7M815 289V290.7M826 289V288.1M832 289V286.8M837 289V286.3M842 289V285.2M848 289V284.5" stroke="#c82828" stroke-width="2"/>
<polyline points="18.0,269.0 35.0,265.5 49.4,263.6 58.9,267.4 68.5,272.2 78.0,281.7 91.4,290.3 101.0,298.0 110.5,300.8 123.9,300.8 137.2,298.9 148.7,300.8 167.8,299.9 181.2,300.8 206.0,301.8 217.4,303.7 235.7,306.6 245.3,303.7 258.6,299.9 268.2,296.0 275.8,289.4 285.4,288.4 295.0,288.4 304.5,285.2 323.6,285.2 337.0,282.7 352.2,280.8 363.7,278.9 373.2,278.9 386.6,283.6 401.9,285.2 411.4,287.5 419.1,293.2 426.7,298.5 438.2,298.9 445.0,295.1 456.5,292.2 469.8,289.4 481.3,287.5 490.8,286.5 496.6,289.4 506.1,298.0 517.6,301.8 527.1,305.6 540.5,311.3 552.0,318.0 569.1,319.0 578.7,320.9 597.8,321.8 607.3,319.6 620.7,316.1 636.0,316.1 653.2,314.2 660.0,312.3 677.2,303.7 694.4,297.0 705.8,289.4 713.5,283.6 717.3,282.7 723.0,283.6 732.6,282.7 744.0,282.3 749.8,280.2 763.1,278.3 776.5,278.3 784.1,281.7 793.7,284.0 803.2,285.9 816.6,284.6 822.3,283.3 831.9,278.9 846.2,274.1" fill="none" stroke="#0c0c60" stroke-width="1.25"/>
<g fill="#f02a2a"><circle cx="19.5" cy="275.5" r="1.6"/><circle cx="25.5" cy="273.5" r="1.6"/><circle cx="30.5" cy="273.5" r="1.6"/><circle cx="35.5" cy="271.5" r="1.6"/><circle cx="41.5" cy="269.5" r="1.6"/><circle cx="46.5" cy="267.5" r="1.6"/><circle cx="52.5" cy="266.5" r="1.6"/><circle cx="57.5" cy="267.5" r="1.6"/><circle cx="62.5" cy="267.5" r="1.6"/><circle cx="68.5" cy="268.5" r="1.6"/><circle cx="73.5" cy="270.5" r="1.6"/><circle cx="79.5" cy="272.5" r="1.6"/><circle cx="84.5" cy="275.5" r="1.6"/><circle cx="89.5" cy="278.5" r="1.6"/><circle cx="95.5" cy="281.5" r="1.6"/><circle cx="100.5" cy="284.5" r="1.6"/><circle cx="106.5" cy="287.5" r="1.6"/><circle cx="111.5" cy="289.5" r="1.6"/><circle cx="116.5" cy="291.5" r="1.6"/><circle cx="122.5" cy="293.5" r="1.6"/><circle cx="127.5" cy="294.5" r="1.6"/><circle cx="133.5" cy="295.5" r="1.6"/><circle cx="138.5" cy="296.5" r="1.6"/><circle cx="144.5" cy="297.5" r="1.6"/><circle cx="149.5" cy="297.5" r="1.6"/><circle cx="154.5" cy="297.5" r="1.6"/><circle cx="160.5" cy="297.5" r="1.6"/><circle cx="165.5" cy="297.5" r="1.6"/><circle cx="171.5" cy="297.5" r="1.6"/><circle cx="176.5" cy="298.5" r="1.6"/><circle cx="181.5" cy="298.5" r="1.6"/><circle cx="187.5" cy="299.5" r="1.6"/><circle cx="192.5" cy="299.5" r="1.6"/><circle cx="198.5" cy="300.5" r="1.6"/><circle cx="203.5" cy="300.5" r="1.6"/><circle cx="208.5" cy="300.5" r="1.6"/><circle cx="214.5" cy="301.5" r="1.6"/><circle cx="219.5" cy="301.5" r="1.6"/><circle cx="225.5" cy="302.5" r="1.6"/><circle cx="230.5" cy="303.5" r="1.6"/><circle cx="235.5" cy="303.5" r="1.6"/><circle cx="241.5" cy="303.5" r="1.6"/><circle cx="246.5" cy="303.5" r="1.6"/><circle cx="252.5" cy="302.5" r="1.6"/><circle cx="257.5" cy="302.5" r="1.6"/><circle cx="263.5" cy="301.5" r="1.6"/><circle cx="268.5" cy="300.5" r="1.6"/><circle cx="273.5" cy="299.5" r="1.6"/><circle cx="279.5" cy="296.5" r="1.6"/><circle cx="284.5" cy="294.5" r="1.6"/><circle cx="290.5" cy="293.5" r="1.6"/><circle cx="295.5" cy="292.5" r="1.6"/><circle cx="300.5" cy="290.5" r="1.6"/><circle cx="306.5" cy="289.5" r="1.6"/><circle cx="311.5" cy="289.5" r="1.6"/><circle cx="317.5" cy="288.5" r="1.6"/><circle cx="322.5" cy="288.5" r="1.6"/><circle cx="327.5" cy="287.5" r="1.6"/><circle cx="333.5" cy="285.5" r="1.6"/><circle cx="338.5" cy="285.5" r="1.6"/><circle cx="344.5" cy="285.5" r="1.6"/><circle cx="349.5" cy="284.5" r="1.6"/><circle cx="355.5" cy="283.5" r="1.6"/><circle cx="360.5" cy="282.5" r="1.6"/><circle cx="365.5" cy="282.5" r="1.6"/><circle cx="371.5" cy="280.5" r="1.6"/><circle cx="376.5" cy="280.5" r="1.6"/><circle cx="382.5" cy="280.5" r="1.6"/><circle cx="387.5" cy="281.5" r="1.6"/><circle cx="392.5" cy="282.5" r="1.6"/><circle cx="398.5" cy="282.5" r="1.6"/><circle cx="403.5" cy="283.5" r="1.6"/><circle cx="409.5" cy="283.5" r="1.6"/><circle cx="414.5" cy="284.5" r="1.6"/><circle cx="419.5" cy="286.5" r="1.6"/><circle cx="425.5" cy="288.5" r="1.6"/><circle cx="430.5" cy="290.5" r="1.6"/><circle cx="436.5" cy="292.5" r="1.6"/><circle cx="441.5" cy="293.5" r="1.6"/><circle cx="446.5" cy="293.5" r="1.6"/><circle cx="452.5" cy="293.5" r="1.6"/><circle cx="457.5" cy="292.5" r="1.6"/><circle cx="463.5" cy="292.5" r="1.6"/><circle cx="468.5" cy="291.5" r="1.6"/><circle cx="474.5" cy="290.5" r="1.6"/><circle cx="479.5" cy="290.5" r="1.6"/><circle cx="484.5" cy="289.5" r="1.6"/><circle cx="490.5" cy="289.5" r="1.6"/><circle cx="495.5" cy="288.5" r="1.6"/><circle cx="501.5" cy="289.5" r="1.6"/><circle cx="506.5" cy="291.5" r="1.6"/><circle cx="511.5" cy="293.5" r="1.6"/><circle cx="517.5" cy="294.5" r="1.6"/><circle cx="522.5" cy="296.5" r="1.6"/><circle cx="528.5" cy="297.5" r="1.6"/><circle cx="533.5" cy="299.5" r="1.6"/><circle cx="538.5" cy="301.5" r="1.6"/><circle cx="544.5" cy="303.5" r="1.6"/><circle cx="549.5" cy="305.5" r="1.6"/><circle cx="555.5" cy="308.5" r="1.6"/><circle cx="560.5" cy="310.5" r="1.6"/><circle cx="565.5" cy="311.5" r="1.6"/><circle cx="571.5" cy="312.5" r="1.6"/><circle cx="576.5" cy="314.5" r="1.6"/><circle cx="582.5" cy="315.5" r="1.6"/><circle cx="587.5" cy="316.5" r="1.6"/><circle cx="593.5" cy="317.5" r="1.6"/><circle cx="598.5" cy="318.5" r="1.6"/><circle cx="603.5" cy="318.5" r="1.6"/><circle cx="609.5" cy="318.5" r="1.6"/><circle cx="614.5" cy="318.5" r="1.6"/><circle cx="620.5" cy="317.5" r="1.6"/><circle cx="625.5" cy="317.5" r="1.6"/><circle cx="630.5" cy="316.5" r="1.6"/><circle cx="636.5" cy="316.5" r="1.6"/><circle cx="641.5" cy="316.5" r="1.6"/><circle cx="647.5" cy="316.5" r="1.6"/><circle cx="652.5" cy="315.5" r="1.6"/><circle cx="657.5" cy="315.5" r="1.6"/><circle cx="663.5" cy="315.5" r="1.6"/><circle cx="668.5" cy="313.5" r="1.6"/><circle cx="674.5" cy="312.5" r="1.6"/><circle cx="679.5" cy="310.5" r="1.6"/><circle cx="684.5" cy="308.5" r="1.6"/><circle cx="690.5" cy="307.5" r="1.6"/><circle cx="695.5" cy="305.5" r="1.6"/><circle cx="701.5" cy="302.5" r="1.6"/><circle cx="706.5" cy="299.5" r="1.6"/><circle cx="712.5" cy="296.5" r="1.6"/><circle cx="717.5" cy="293.5" r="1.6"/><circle cx="722.5" cy="291.5" r="1.6"/><circle cx="728.5" cy="289.5" r="1.6"/><circle cx="733.5" cy="288.5" r="1.6"/><circle cx="739.5" cy="287.5" r="1.6"/><circle cx="744.5" cy="285.5" r="1.6"/><circle cx="749.5" cy="285.5" r="1.6"/><circle cx="755.5" cy="284.5" r="1.6"/><circle cx="760.5" cy="282.5" r="1.6"/><circle cx="766.5" cy="281.5" r="1.6"/><circle cx="771.5" cy="280.5" r="1.6"/><circle cx="776.5" cy="280.5" r="1.6"/><circle cx="782.5" cy="280.5" r="1.6"/><circle cx="787.5" cy="280.5" r="1.6"/><circle cx="793.5" cy="280.5" r="1.6"/><circle cx="798.5" cy="281.5" r="1.6"/><circle cx="804.5" cy="282.5" r="1.6"/><circle cx="809.5" cy="283.5" r="1.6"/><circle cx="814.5" cy="283.5" r="1.6"/><circle cx="820.5" cy="284.5" r="1.6"/><circle cx="825.5" cy="283.5" r="1.6"/><circle cx="831.5" cy="282.5" r="1.6"/><circle cx="836.5" cy="280.5" r="1.6"/><circle cx="841.5" cy="279.5" r="1.6"/><circle cx="847.5" cy="279.5" r="1.6"/></g></g>
<rect x="20" y="260" width="30" height="12" fill="#39414a"/>
<text x="20" y="270" font-size="10.3" fill="#14147e" stroke="#14147e" stroke-width="0.25" textLength="29" lengthAdjust="spacingAndGlyphs">MACD</text>
<line x1="19" y1="339" x2="847" y2="339" stroke="#1a1aa8" stroke-width="2"/>
<line x1="19" y1="397" x2="847" y2="397" stroke="#1a1aa8" stroke-width="2"/>
<g clip-path="url(#cr)"><polyline points="20.0,337.0 36.0,336.0 40.0,340.0 43.6,340.0 45.6,339.5 48.4,345.2 51.3,358.6 57.0,366.2 60.8,367.2 65.6,367.2 69.4,370.0 72.3,378.6 78.0,381.5 83.8,382.4 88.5,380.5 94.3,385.3 100.0,390.0 106.7,383.4 116.2,382.4 122.9,374.8 129.6,374.2 138.2,371.5 143.0,387.2 154.4,370.0 160.2,373.8 165.9,376.7 171.6,377.7 181.2,382.4 187.8,382.4 192.6,385.3 198.3,382.4 204.0,383.4 213.6,388.2 219.4,394.8 225.1,394.8 230.8,391.0 235.7,395.8 240.5,377.7 245.3,374.2 252.9,374.2 258.6,370.0 265.3,364.3 269.2,358.6 273.0,342.3 279.7,354.7 284.4,371.9 290.2,365.2 295.9,365.2 300.7,358.9 306.4,361.4 312.1,365.2 316.9,362.4 322.6,367.7 331.2,361.4 338.9,354.7 344.6,358.6 349.4,359.5 355.1,356.6 360.8,350.5 367.5,355.7 371.3,357.6 376.1,368.1 382.8,371.0 387.6,374.2 398.1,362.4 403.8,366.2 408.6,374.8 414.3,379.6 420.0,392.0 425.8,395.2 429.6,378.0 431.5,376.7 436.3,376.1 442.0,370.0 446.8,363.3 449.8,362.4 457.4,363.3 463.1,360.5 468.9,366.2 473.6,359.5 479.4,368.1 486.1,361.4 490.8,360.5 495.6,379.6 500.4,385.3 506.1,392.0 510.9,382.4 522.3,382.4 528.1,387.6 532.9,385.3 538.6,394.5 544.3,393.9 549.1,396.4 552.0,398.7 555.8,398.7 560.5,388.7 567.2,390.6 576.8,395.8 582.5,392.0 588.2,395.2 592.1,393.9 597.8,396.4 602.6,386.3 608.3,384.3 619.8,385.3 626.4,389.1 632.2,393.9 636.0,395.2 640.8,389.5 647.4,394.5 657.0,381.5 663.8,374.2 667.6,376.7 673.4,372.9 680.0,368.5 684.8,368.5 690.6,366.2 696.3,355.7 701.1,348.0 705.8,346.1 711.6,349.0 716.3,350.9 723.0,363.3 727.8,362.4 734.5,358.2 740.2,358.2 744.0,360.5 749.8,349.4 755.5,360.5 760.3,351.3 766.0,354.7 770.8,354.7 775.5,358.6 782.2,372.3 788.0,369.1 792.7,371.5 798.5,367.2 803.2,371.5 810.9,362.8 814.7,361.4 822.3,353.8 830.0,344.8 834.8,345.2 840.5,342.9 846.2,342.9" fill="none" stroke="#f08c46" stroke-width="1"/></g>
<defs><clipPath id="chi"><rect x="36" y="332" width="20" height="9"/></clipPath><clipPath id="clo"><rect x="19" y="395.5" width="875" height="5"/></clipPath></defs>
<g clip-path="url(#chi)"><polyline points="20.0,337.0 36.0,336.0 40.0,340.0 43.6,340.0 45.6,339.5 48.4,345.2 51.3,358.6 57.0,366.2 60.8,367.2 65.6,367.2 69.4,370.0 72.3,378.6 78.0,381.5 83.8,382.4 88.5,380.5 94.3,385.3 100.0,390.0 106.7,383.4 116.2,382.4 122.9,374.8 129.6,374.2 138.2,371.5 143.0,387.2 154.4,370.0 160.2,373.8 165.9,376.7 171.6,377.7 181.2,382.4 187.8,382.4 192.6,385.3 198.3,382.4 204.0,383.4 213.6,388.2 219.4,394.8 225.1,394.8 230.8,391.0 235.7,395.8 240.5,377.7 245.3,374.2 252.9,374.2 258.6,370.0 265.3,364.3 269.2,358.6 273.0,342.3 279.7,354.7 284.4,371.9 290.2,365.2 295.9,365.2 300.7,358.9 306.4,361.4 312.1,365.2 316.9,362.4 322.6,367.7 331.2,361.4 338.9,354.7 344.6,358.6 349.4,359.5 355.1,356.6 360.8,350.5 367.5,355.7 371.3,357.6 376.1,368.1 382.8,371.0 387.6,374.2 398.1,362.4 403.8,366.2 408.6,374.8 414.3,379.6 420.0,392.0 425.8,395.2 429.6,378.0 431.5,376.7 436.3,376.1 442.0,370.0 446.8,363.3 449.8,362.4 457.4,363.3 463.1,360.5 468.9,366.2 473.6,359.5 479.4,368.1 486.1,361.4 490.8,360.5 495.6,379.6 500.4,385.3 506.1,392.0 510.9,382.4 522.3,382.4 528.1,387.6 532.9,385.3 538.6,394.5 544.3,393.9 549.1,396.4 552.0,398.7 555.8,398.7 560.5,388.7 567.2,390.6 576.8,395.8 582.5,392.0 588.2,395.2 592.1,393.9 597.8,396.4 602.6,386.3 608.3,384.3 619.8,385.3 626.4,389.1 632.2,393.9 636.0,395.2 640.8,389.5 647.4,394.5 657.0,381.5 663.8,374.2 667.6,376.7 673.4,372.9 680.0,368.5 684.8,368.5 690.6,366.2 696.3,355.7 701.1,348.0 705.8,346.1 711.6,349.0 716.3,350.9 723.0,363.3 727.8,362.4 734.5,358.2 740.2,358.2 744.0,360.5 749.8,349.4 755.5,360.5 760.3,351.3 766.0,354.7 770.8,354.7 775.5,358.6 782.2,372.3 788.0,369.1 792.7,371.5 798.5,367.2 803.2,371.5 810.9,362.8 814.7,361.4 822.3,353.8 830.0,344.8 834.8,345.2 840.5,342.9 846.2,342.9" fill="none" stroke="#e040d0" stroke-width="1"/></g>
<g clip-path="url(#clo)"><polyline points="20.0,337.0 36.0,336.0 40.0,340.0 43.6,340.0 45.6,339.5 48.4,345.2 51.3,358.6 57.0,366.2 60.8,367.2 65.6,367.2 69.4,370.0 72.3,378.6 78.0,381.5 83.8,382.4 88.5,380.5 94.3,385.3 100.0,390.0 106.7,383.4 116.2,382.4 122.9,374.8 129.6,374.2 138.2,371.5 143.0,387.2 154.4,370.0 160.2,373.8 165.9,376.7 171.6,377.7 181.2,382.4 187.8,382.4 192.6,385.3 198.3,382.4 204.0,383.4 213.6,388.2 219.4,394.8 225.1,394.8 230.8,391.0 235.7,395.8 240.5,377.7 245.3,374.2 252.9,374.2 258.6,370.0 265.3,364.3 269.2,358.6 273.0,342.3 279.7,354.7 284.4,371.9 290.2,365.2 295.9,365.2 300.7,358.9 306.4,361.4 312.1,365.2 316.9,362.4 322.6,367.7 331.2,361.4 338.9,354.7 344.6,358.6 349.4,359.5 355.1,356.6 360.8,350.5 367.5,355.7 371.3,357.6 376.1,368.1 382.8,371.0 387.6,374.2 398.1,362.4 403.8,366.2 408.6,374.8 414.3,379.6 420.0,392.0 425.8,395.2 429.6,378.0 431.5,376.7 436.3,376.1 442.0,370.0 446.8,363.3 449.8,362.4 457.4,363.3 463.1,360.5 468.9,366.2 473.6,359.5 479.4,368.1 486.1,361.4 490.8,360.5 495.6,379.6 500.4,385.3 506.1,392.0 510.9,382.4 522.3,382.4 528.1,387.6 532.9,385.3 538.6,394.5 544.3,393.9 549.1,396.4 552.0,398.7 555.8,398.7 560.5,388.7 567.2,390.6 576.8,395.8 582.5,392.0 588.2,395.2 592.1,393.9 597.8,396.4 602.6,386.3 608.3,384.3 619.8,385.3 626.4,389.1 632.2,393.9 636.0,395.2 640.8,389.5 647.4,394.5 657.0,381.5 663.8,374.2 667.6,376.7 673.4,372.9 680.0,368.5 684.8,368.5 690.6,366.2 696.3,355.7 701.1,348.0 705.8,346.1 711.6,349.0 716.3,350.9 723.0,363.3 727.8,362.4 734.5,358.2 740.2,358.2 744.0,360.5 749.8,349.4 755.5,360.5 760.3,351.3 766.0,354.7 770.8,354.7 775.5,358.6 782.2,372.3 788.0,369.1 792.7,371.5 798.5,367.2 803.2,371.5 810.9,362.8 814.7,361.4 822.3,353.8 830.0,344.8 834.8,345.2 840.5,342.9 846.2,342.9" fill="none" stroke="#30c030" stroke-width="1"/></g>
<rect x="19" y="333" width="17" height="12" fill="#39414a"/>
<text x="20.5" y="343" font-size="10.4" fill="#e88a3a" stroke="#e88a3a" stroke-width="0.25" textLength="14.5" lengthAdjust="spacingAndGlyphs">RSI</text>
<line x1="18.5" y1="42" x2="18.5" y2="405" stroke="#8fa0b0"/>
<rect x="18.5" y="378.5" width="60" height="19" rx="2" fill="#5d6c7e" stroke="#b9c6d3"/>
<text x="26" y="392" font-size="10.6" fill="#fff" stroke="#fff" stroke-width="0.3" textLength="46" lengthAdjust="spacingAndGlyphs">Сен 2020</text>
<line x1="744.5" y1="42" x2="744.5" y2="405" stroke="#8fa0b0"/>
<rect x="744.5" y="378.5" width="60" height="19" rx="2" fill="#5d6c7e" stroke="#b9c6d3"/>
<text x="752" y="392" font-size="10.6" fill="#fff" stroke="#fff" stroke-width="0.3" textLength="46" lengthAdjust="spacingAndGlyphs">Окт 2020</text>
</svg>
</body></html>
